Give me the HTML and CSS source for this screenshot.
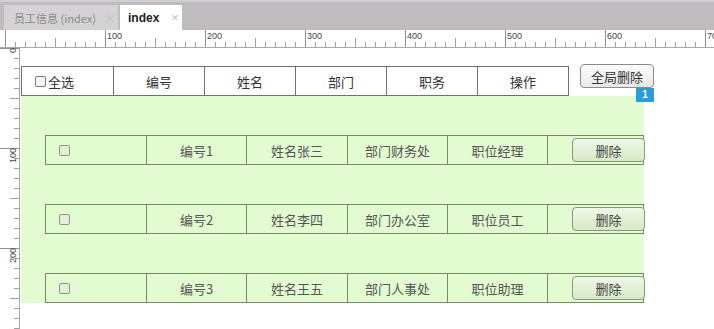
FILE: index.html
```html
<!DOCTYPE html>
<html lang="zh">
<head>
    <meta charset="UTF-8">
    <title>员工信息</title>
    <link rel="stylesheet" href="styles.css">
</head>
<body>
<div class="tabs">
    <div class="tab">员工信息 (index)<span class="tab-close">×</span></div>
    <div class="tab tab-active">index<span class="tab-close">×</span></div>
</div>

<div class="hruler">
    <span class="hmark">100</span>
    <span class="hmark">200</span>
    <span class="hmark">300</span>
    <span class="hmark">400</span>
    <span class="hmark">500</span>
    <span class="hmark">600</span>
    <span class="hmark">70</span>
</div>

<div class="workspace">
    <div class="vruler">
        <span class="vmark">0</span>
        <span class="vmark">100</span>
        <span class="vmark">200</span>
    </div>

    <div class="canvas">
        <div class="top-line">
            <div class="head-table">
                <div class="head-cell head-check"><span class="box"></span>全选</div>
                <div class="head-cell">编号</div>
                <div class="head-cell">姓名</div>
                <div class="head-cell">部门</div>
                <div class="head-cell">职务</div>
                <div class="head-cell">操作</div>
            </div>
            <button class="btn-all">全局删除<span class="badge">1</span></button>
        </div>

        <div class="panel">
            <div class="row">
                <div class="cell cell-check"><span class="box box-green"></span></div>
                <div class="cell">编号1</div>
                <div class="cell">姓名张三</div>
                <div class="cell">部门财务处</div>
                <div class="cell">职位经理</div>
                <div class="cell cell-op"><button class="btn-del">删除</button></div>
            </div>
            <div class="row">
                <div class="cell cell-check"><span class="box box-green"></span></div>
                <div class="cell">编号2</div>
                <div class="cell">姓名李四</div>
                <div class="cell">部门办公室</div>
                <div class="cell">职位员工</div>
                <div class="cell cell-op"><button class="btn-del">删除</button></div>
            </div>
            <div class="row">
                <div class="cell cell-check"><span class="box box-green"></span></div>
                <div class="cell">编号3</div>
                <div class="cell">姓名王五</div>
                <div class="cell">部门人事处</div>
                <div class="cell">职位助理</div>
                <div class="cell cell-op"><button class="btn-del">删除</button></div>
            </div>
        </div>
    </div>
</div>
</body>
</html>
```

FILE: styles.css
```css
body {
    margin: 0;
    height: 329px;
    overflow: hidden;
    background: #ffffff;
    font-family: "Noto Sans CJK SC", "Liberation Sans", sans-serif;
    color: #333;
}

/* tab strip */
.tabs {
    height: 30px;
    box-sizing: border-box;
    padding: 5px 0 0 4px;
    background: #bfbbbf;
    border-top: 2px solid #d2cfd2;
    display: flex;
    align-items: flex-end;
    gap: 2px;
}

.tab {
    flex: 0 0 auto;
    height: 25px;
    box-sizing: border-box;
    padding: 0 0 0 10px;
    display: flex;
    align-items: center;
    white-space: nowrap;
    font-size: 11px;
    color: #8a8a8a;
    background: #d5d2d5;
    width: 114px;
}

.tab-active {
    width: 62px;
    padding-left: 8px;
    background: #ffffff;
    color: #222;
    font-size: 12px;
    font-weight: bold;
    font-family: "Liberation Sans", sans-serif;
}

.tab-close {
    margin-left: 8px;
    font-weight: normal;
    color: #c4c4c4;
    font-size: 13px;
}

.tab-active .tab-close {
    margin-left: 12px;
}

/* rulers */
.hruler {
    height: 18px;
    box-sizing: border-box;
    border-bottom: 1px solid #a8a8a8;
    padding-left: 107px;
    display: flex;
    overflow: hidden;
    background:
        linear-gradient(to right, #909090 1px, transparent 1px) 5px 0 / 100px 17px repeat-x,
        linear-gradient(to right, #a0a0a0 1px, transparent 1px) 5px 100% / 50px 9px repeat-x,
        linear-gradient(to right, #a0a0a0 1px, transparent 1px) 5px 100% / 10px 5px repeat-x;
}

.hmark {
    flex: 0 0 100px;
    font-family: "Liberation Sans", sans-serif;
    font-size: 9px;
    line-height: 11px;
    color: #444;
    padding-top: 1px;
}

.workspace {
    display: flex;
    height: 281px;
    overflow: hidden;
}

.vruler {
    flex: 0 0 20px;
    box-sizing: border-box;
    border-right: 1px solid #a8a8a8;
    display: flex;
    flex-direction: column;
    overflow: hidden;
    background:
        linear-gradient(to bottom, #909090 1px, transparent 1px) 0 0 / 19px 100px repeat-y,
        linear-gradient(to bottom, #a0a0a0 1px, transparent 1px) 100% 0 / 9px 50px repeat-y,
        linear-gradient(to bottom, #a0a0a0 1px, transparent 1px) 100% 0 / 5px 10px repeat-y;
}

.vmark {
    flex: 0 0 100px;
    box-sizing: border-box;
    padding: 2px 8px 0 0;
    writing-mode: vertical-rl;
    transform: rotate(180deg);
    font-family: "Liberation Sans", sans-serif;
    font-size: 9px;
    color: #444;
    display: flex;
    justify-content: flex-end;
}

/* design canvas */
.canvas {
    flex: 1;
    padding: 16px 0 0 1px;
}

.top-line {
    display: flex;
    align-items: flex-start;
}

.head-table {
    margin-top: 2px;
    width: 548px;
    height: 30px;
    box-sizing: border-box;
    border: 1px solid #707070;
    display: grid;
    grid-template-columns: 91px 91px 91px 91px 91px 1fr;
    background: #ffffff;
}

.head-cell {
    display: flex;
    align-items: center;
    justify-content: center;
    font-size: 13px;
    color: #333;
    border-left: 1px solid #707070;
}

.head-cell:first-child {
    border-left: none;
}

.head-check {
    justify-content: flex-start;
    padding-left: 13px;
    gap: 2px;
}

.box {
    width: 11px;
    height: 11px;
    box-sizing: border-box;
    border: 1px solid #777;
    border-radius: 2px;
    background: #f6f6f6;
}

.box-green {
    border-color: #8b9a7e;
    background: #e4efd9;
}

.btn-all {
    position: relative;
    margin-left: 11px;
    width: 74px;
    height: 24px;
    padding: 0;
    border: 1px solid #8c8c8c;
    border-radius: 4px;
    background: linear-gradient(#fdfdfd, #e8e8e8);
    font-family: inherit;
    font-size: 13px;
    color: #333;
}

.badge {
    position: absolute;
    right: -1px;
    top: calc(100% + 1px);
    width: 18px;
    height: 14px;
    background: #2a9cd6;
    color: #ffffff;
    font-family: "Liberation Sans", sans-serif;
    font-size: 10px;
    font-weight: bold;
    line-height: 14px;
    text-align: center;
}

.panel {
    width: 623px;
    box-sizing: border-box;
    padding: 39px 0 0 24px;
    background: #e3fbd1;
    display: flex;
    flex-direction: column;
    gap: 39px;
}

.row {
    height: 30px;
    box-sizing: border-box;
    border: 1px solid #76895f;
    display: grid;
    grid-template-columns: 100px 100px 101px 100px 100px 1fr;
}

.cell {
    display: flex;
    align-items: center;
    justify-content: center;
    font-size: 13px;
    color: #555;
    border-left: 1px solid #76895f;
}

.cell:first-child {
    border-left: none;
}

.cell-check {
    justify-content: flex-start;
    padding-left: 13px;
}

.cell-op {
    justify-content: flex-start;
    padding-left: 24px;
}

.btn-del {
    width: 73px;
    height: 24px;
    padding: 0;
    border: 1px solid #8a977c;
    border-radius: 4px;
    background: linear-gradient(#eff8e6, #d7e9c8);
    font-family: inherit;
    font-size: 13px;
    color: #444;
}
```
